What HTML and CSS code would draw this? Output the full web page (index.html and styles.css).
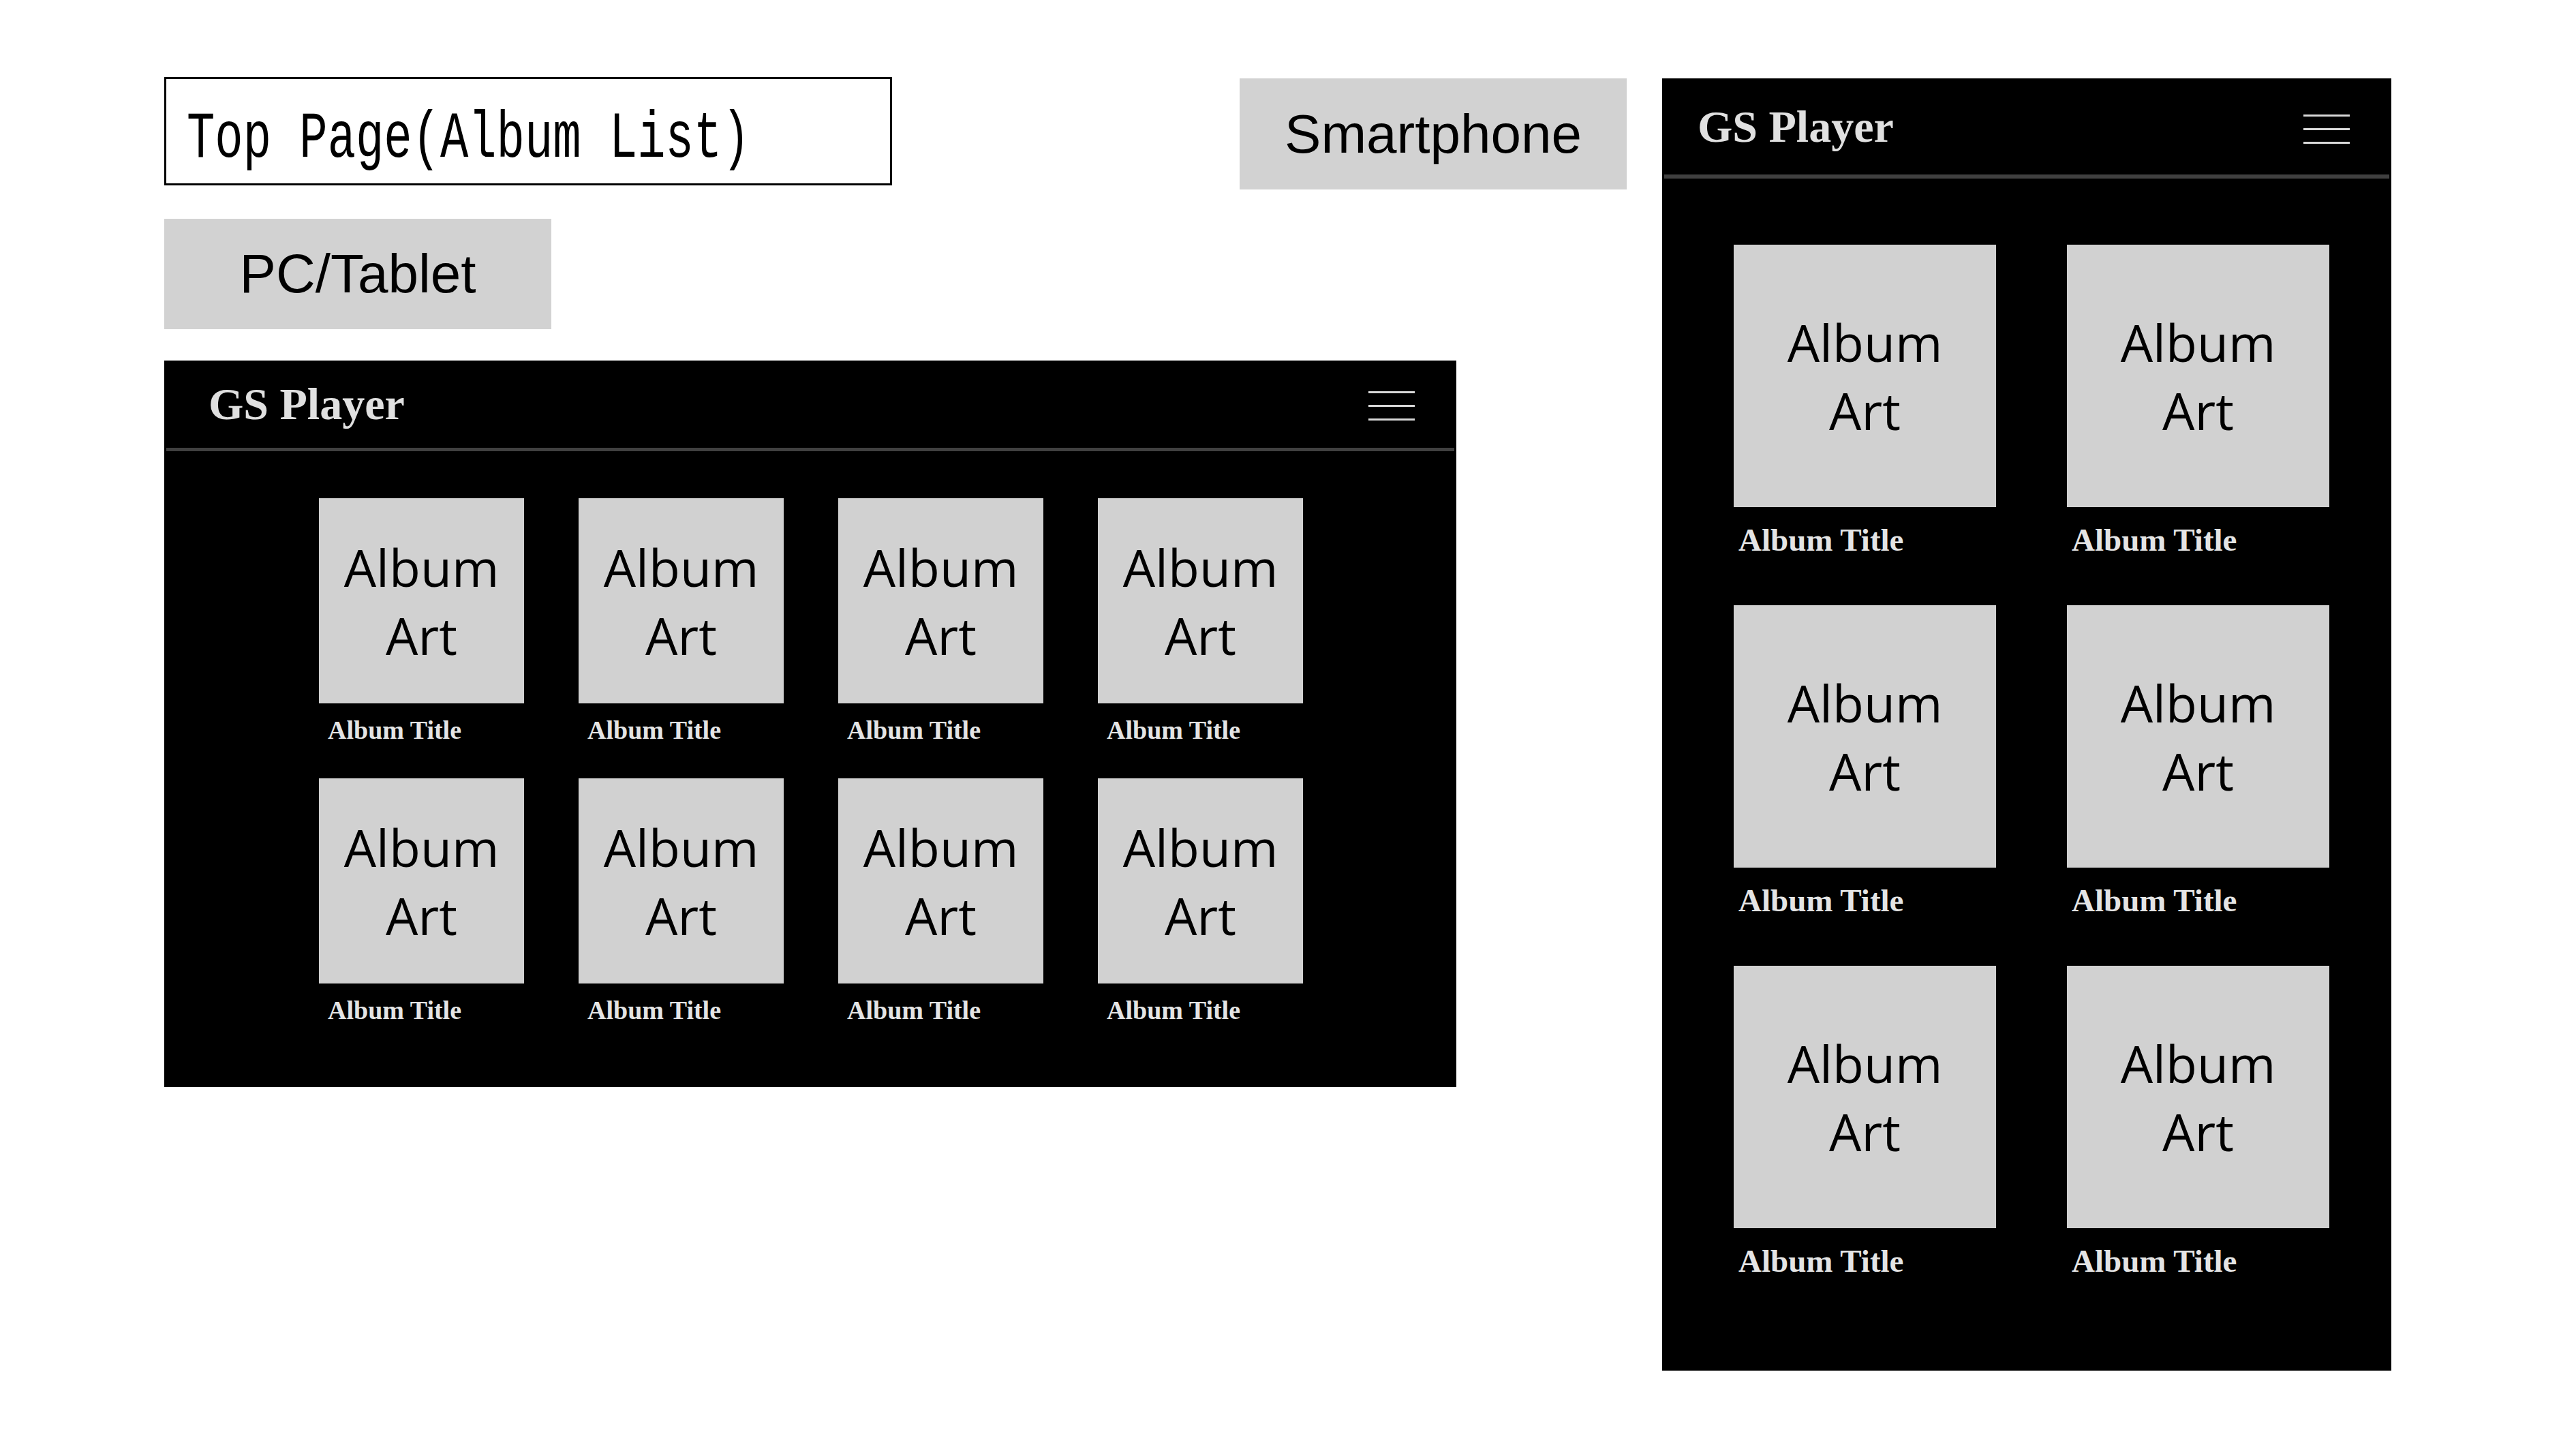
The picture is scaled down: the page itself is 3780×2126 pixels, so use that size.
FILE: index.html
```html
<!DOCTYPE html>
<html lang="en">
<head>
    <meta charset="UTF-8">
    <meta name="viewport" content="width=device-width, initial-scale=1.0">
    <title>GS Player - Top Page</title>
<link rel="stylesheet" href="styles.css">
</head>
<body>
    <div class="page">
        <div class="pc-side">
            <div class="top-row">
                <div class="page-title"><span>Top Page(Album List)</span></div>
                <div class="device-label label-phone">Smartphone</div>
            </div>
            <div class="device-label label-pc">PC/Tablet</div>

            <div class="app app-pc">
                <div class="app-header">
                    <div class="app-name">GS Player</div>
                    <div class="menu-icon"><span></span><span></span><span></span></div>
                </div>
                <div class="divider"></div>
                <div class="album-grid">
                    <div class="album"><div class="album-art">Album<br>Art</div><div class="album-title">Album Title</div></div>
                    <div class="album"><div class="album-art">Album<br>Art</div><div class="album-title">Album Title</div></div>
                    <div class="album"><div class="album-art">Album<br>Art</div><div class="album-title">Album Title</div></div>
                    <div class="album"><div class="album-art">Album<br>Art</div><div class="album-title">Album Title</div></div>
                    <div class="album"><div class="album-art">Album<br>Art</div><div class="album-title">Album Title</div></div>
                    <div class="album"><div class="album-art">Album<br>Art</div><div class="album-title">Album Title</div></div>
                    <div class="album"><div class="album-art">Album<br>Art</div><div class="album-title">Album Title</div></div>
                    <div class="album"><div class="album-art">Album<br>Art</div><div class="album-title">Album Title</div></div>
                </div>
            </div>
        </div>

        <div class="app app-phone">
            <div class="app-header">
                <div class="app-name">GS Player</div>
                <div class="menu-icon"><span></span><span></span><span></span></div>
            </div>
            <div class="divider"></div>
            <div class="album-grid">
                <div class="album"><div class="album-art">Album<br>Art</div><div class="album-title">Album Title</div></div>
                <div class="album"><div class="album-art">Album<br>Art</div><div class="album-title">Album Title</div></div>
                <div class="album"><div class="album-art">Album<br>Art</div><div class="album-title">Album Title</div></div>
                <div class="album"><div class="album-art">Album<br>Art</div><div class="album-title">Album Title</div></div>
                <div class="album"><div class="album-art">Album<br>Art</div><div class="album-title">Album Title</div></div>
                <div class="album"><div class="album-art">Album<br>Art</div><div class="album-title">Album Title</div></div>
            </div>
        </div>
    </div>
</body>
</html>
```

FILE: styles.css
```css
body {
    margin: 0;
    background: #ffffff;
    font-family: "Liberation Sans", Arial, sans-serif;
}

.page {
    display: flex;
    align-items: flex-start;
    gap: 52px;
    padding: 113px 0 0 241px;
}

.pc-side {
    width: 2146px;
}

.top-row {
    display: flex;
    justify-content: space-between;
    align-items: flex-start;
}

.page-title {
    box-sizing: border-box;
    width: 1068px;
    height: 159px;
    border: 3px solid #000;
    padding: 40px 0 0 30px;
    font-family: "Liberation Mono", monospace;
    font-size: 97px;
    line-height: 96px;
    white-space: nowrap;
}

.page-title span {
    display: inline-block;
    transform: scaleX(0.71);
    transform-origin: left center;
}

.device-label {
    width: 568px;
    height: 162px;
    background: #d2d2d2;
    display: flex;
    justify-content: center;
    align-items: center;
    font-size: 80px;
    color: #000;
}

.label-phone {
    margin-top: 2px;
    height: 163px;
}

.label-pc {
    margin-top: 43px;
}

/* app mockups */
.app {
    box-sizing: border-box;
    background: #000;
}

.app-pc {
    width: 1896px;
    height: 1066px;
    margin-top: 46px;
}

.app-phone {
    width: 1070px;
    height: 1896px;
    margin-top: 2px;
}

.app-header {
    display: flex;
    justify-content: space-between;
    align-items: center;
}

.app-pc .app-header {
    height: 128px;
    padding: 0 61px 0 65px;
}

.app-phone .app-header {
    height: 141px;
    padding: 0 61px 0 52px;
}

.app-name {
    font-family: "Liberation Serif", "Times New Roman", serif;
    font-weight: bold;
    font-size: 66px;
    color: #e0e0e0;
}

.menu-icon {
    display: flex;
    flex-direction: column;
    gap: 17px;
    margin-top: 4px;
}

.app-phone .menu-icon {
    margin-top: 7px;
}

.menu-icon span {
    display: block;
    width: 68px;
    height: 3px;
    background: #d8d8d8;
}

.divider {
    height: 5px;
    margin: 0 3px;
    background: #404040;
}

.app-phone .divider {
    height: 6px;
}

.album-grid {
    display: grid;
}

.app-pc .album-grid {
    grid-template-columns: repeat(4, 301px);
    column-gap: 80px;
    row-gap: 46px;
    padding: 69px 0 0 227px;
}

.app-phone .album-grid {
    grid-template-columns: repeat(2, 385px);
    column-gap: 104px;
    row-gap: 66px;
    padding: 97px 0 0 105px;
}

.album-art {
    display: flex;
    justify-content: center;
    align-items: center;
    text-align: center;
    background: #d1d1d1;
    color: #000;
    font-family: "Open Sans", sans-serif;
    font-size: 75px;
    line-height: 100px;
}

.app-pc .album-art {
    height: 301px;
}

.app-phone .album-art {
    height: 385px;
}

.album-title {
    font-family: "Liberation Serif", "Times New Roman", serif;
    font-weight: bold;
    color: #e4e4e4;
}

.app-pc .album-title {
    font-size: 38px;
    line-height: 50px;
    margin-top: 14px;
    padding-left: 13px;
}

.app-phone .album-title {
    font-size: 47px;
    line-height: 60px;
    margin-top: 18px;
    padding-left: 7px;
}
```
